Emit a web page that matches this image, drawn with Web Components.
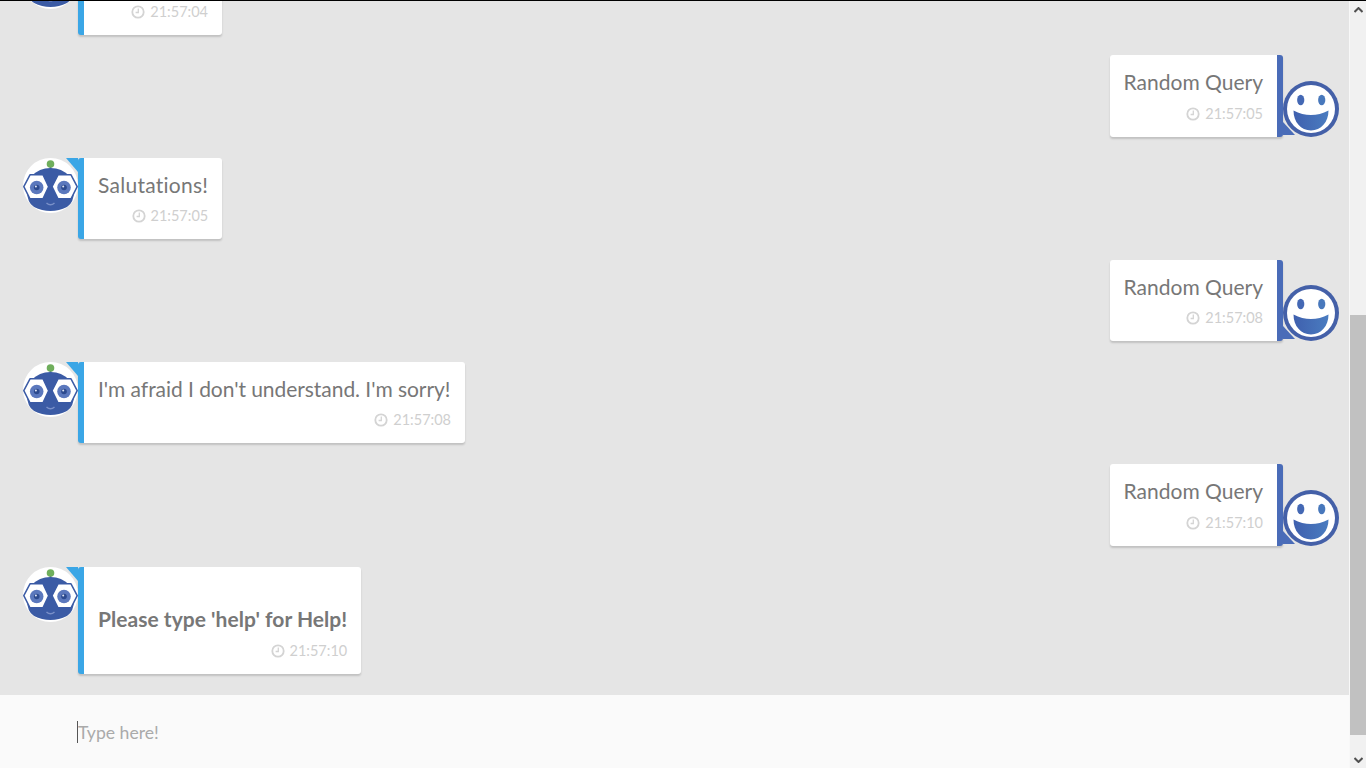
<!DOCTYPE html>
<html>
<head>
<meta charset="utf-8">
<title>Chat</title>
<style>
  html, body { margin: 0; height: 100%; overflow: hidden; background: #e5e5e5; font-family: Lato, "Liberation Sans", sans-serif; }
  body { display: flex; flex-direction: column; }
  .bar { height: 1px; background: #000; flex: none; }
  .page { flex: 1; display: flex; min-height: 0; }
  .main { flex: 1; display: flex; flex-direction: column; min-width: 0; }
  b { font-weight: 700; letter-spacing: .03px; }
</style>
</head>
<body>
<div class="bar"></div>
<div class="page">
  <div class="main">
    <chat-log>
      <chat-message from="bot" time="21:57:04" style="margin-bottom: -1px; --min-width: 144px">&nbsp;</chat-message>
      <chat-message from="user" time="21:57:05">Random Query</chat-message>
      <chat-message from="bot" time="21:57:05" style="--min-width: 144px"><span style="letter-spacing: .26px">Salutations!</span></chat-message>
      <chat-message from="user" time="21:57:08">Random Query</chat-message>
      <chat-message from="bot" time="21:57:08" style="--min-width: 387px"><span style="letter-spacing: -.05px">I'm afraid I don't understand. I'm sorry!</span></chat-message>
      <chat-message from="user" time="21:57:10">Random Query</chat-message>
      <chat-message from="bot" time="21:57:10" spaced><b>Please type 'help' for Help!</b></chat-message>
    </chat-log>
    <chat-input placeholder="Type here!"></chat-input>
  </div>
  <page-scrollbar></page-scrollbar>
</div>
<script>
class ChatLog extends HTMLElement {
    constructor() {
        super();
        this._root = this.attachShadow({ mode: "open" });
        this._root.innerHTML = `
            <style>
                :host { display: flex; flex-direction: column; justify-content: flex-end; flex: 1; min-height: 0; overflow: hidden; }
                .list { display: flex; flex-direction: column; gap: 21px; padding-bottom: 21px; flex: none; }
            </style>
            <div class="list"><slot></slot></div>
        `;
    }
}
window.customElements.define("chat-log", ChatLog);

class BotAvatar extends HTMLElement {
    constructor() {
        super();
        this._root = this.attachShadow({ mode: "open" });
        this._root.innerHTML = `
            <style>:host { display: block; width: 55px; height: 55px; } svg { display: block; }</style>
            <svg width="55" height="55" viewBox="0 0 55 55">
                <defs><clipPath id="c"><circle cx="27.5" cy="27.5" r="27.5"/></clipPath></defs>
                <circle cx="27.5" cy="27.5" r="27.5" fill="#fff"/>
                <rect x="26.6" y="6" width="1.8" height="6" fill="#3b5ba5"/>
                <circle cx="27.5" cy="6" r="3.8" fill="#6fae5c"/>
                <g clip-path="url(#c)">
                    <path d="M9 18 Q16 10 27.5 10 Q39 10 46 18 L51 32 Q51 45 44 49 Q36 53 27.5 53 Q19 53 11 49 Q4 45 4 32 Z" fill="#3b5ba5"/>
                </g>
                <path d="M7 16.8 H20 L25.6 28.7 L20 40.8 H7 L0.8 28.7 Z" fill="#fff" stroke="#3b5ba5" stroke-width="1.5" stroke-linejoin="round"/>
                <path d="M35 16.8 H48 L54.2 28.7 L48 40.8 H35 L29 28.7 Z" fill="#fff" stroke="#3b5ba5" stroke-width="1.5" stroke-linejoin="round"/>
                <circle cx="13.7" cy="29.5" r="6.8" fill="#5b78bd"/>
                <circle cx="13.7" cy="29.5" r="2.8" fill="#2c4a8e"/>
                <circle cx="12.9" cy="28.6" r="1" fill="#dfe6f5"/>
                <circle cx="41" cy="29.5" r="6.8" fill="#5b78bd"/>
                <circle cx="41" cy="29.5" r="2.8" fill="#2c4a8e"/>
                <circle cx="40.2" cy="28.6" r="1" fill="#dfe6f5"/>
                <path d="M23.5 45 Q27.5 48.5 31.5 45" fill="none" stroke="#7a90c8" stroke-width="1.5"/>
            </svg>
        `;
    }
}
window.customElements.define("bot-avatar", BotAvatar);

class UserAvatar extends HTMLElement {
    constructor() {
        super();
        this._root = this.attachShadow({ mode: "open" });
        this._root.innerHTML = `
            <style>:host { display: block; width: 56px; height: 56px; } svg { display: block; }</style>
            <svg width="56" height="56" viewBox="0 0 56 56">
                <defs>
                    <linearGradient id="g" x1="0" x2="1" y1="0" y2="0">
                        <stop offset="0" stop-color="#3f60ae"/>
                        <stop offset="1" stop-color="#4a7cc0"/>
                    </linearGradient>
                </defs>
                <circle cx="28" cy="28" r="28" fill="#4460a8"/>
                <circle cx="28" cy="28" r="24" fill="#fff"/>
                <ellipse cx="17.7" cy="19" rx="3.6" ry="5.3" fill="#4468b4"/>
                <ellipse cx="38.7" cy="19" rx="3.6" ry="5.3" fill="#4878bc"/>
                <path d="M10.5 29.5 Q28 38.5 45.5 29.5 C45.5 41 38 49.5 28 49.5 C18 49.5 10.5 41 10.5 29.5 Z" fill="url(#g)"/>
            </svg>
        `;
    }
}
window.customElements.define("user-avatar", UserAvatar);

class ChatMessage extends HTMLElement {
    constructor() {
        super();
        this._root = this.attachShadow({ mode: "open" });
    }
    connectedCallback() {
        const isUser = this.getAttribute("from") === "user";
        const time = this.getAttribute("time");
        this._root.innerHTML = `
            <style>
                :host { display: flex; height: 81px; flex: none; padding: 0 10px 0 23px; }
                :host([spaced]) { height: 107px; }
                :host([from="user"]) { height: 81.6px; justify-content: flex-end; align-items: flex-end; }
                .avatar { position: relative; z-index: 1; flex: none; }
                :host([from="user"]) .avatar { order: 2; }
                .bubble {
                    position: relative;
                    background: #fff;
                    border-radius: 3px;
                    border-left: 6px solid #3aa6e6;
                    box-shadow: 0 2px 2px rgba(0, 0, 0, .16);
                    padding: 14px 14px 0;
                    box-sizing: border-box;
                    height: 100%;
                    min-width: var(--min-width, 0);
                    color: #777;
                }
                :host([from="user"]) .bubble { border-left: 0; border-right: 6px solid #4a6cb8; }
                .bubble::before {
                    content: "";
                    position: absolute;
                    top: 0;
                    left: -18px;
                    border-top: 14px solid #3aa6e6;
                    border-left: 12px solid transparent;
                }
                :host([from="user"]) .bubble::before {
                    top: auto;
                    left: auto;
                    bottom: 2px;
                    right: -18px;
                    border-top: 0;
                    border-left: 0;
                    border-bottom: 13px solid #4a6cb8;
                    border-right: 12px solid transparent;
                }
                .text { font-size: 21px; line-height: 26px; white-space: nowrap; font-variant-ligatures: none; }
                :host([spaced]) .text { padding-top: 25px; }
                .time { display: flex; justify-content: flex-end; align-items: center; gap: 5px; margin-top: 7px; font-size: 14.5px; line-height: 22px; color: #cfcfcf; }
                :host([from="user"]) .time { margin-top: 7.3px; }
                :host([spaced]) .time { margin-top: 8px; }
                .time svg { display: block; }
            </style>
            ${isUser ? "<user-avatar class='avatar'></user-avatar>" : "<bot-avatar class='avatar'></bot-avatar>"}
            <div class="bubble">
                <div class="text"><slot></slot></div>
                <div class="time">
                    <svg width="14" height="14" viewBox="0 0 14 14" fill="none" stroke="#d4d4d4">
                        <circle cx="7" cy="7" r="5.7" stroke-width="1.8"/>
                        <path d="M7.3 3.6 V7.5 H4.6" stroke-width="1.3"/>
                    </svg>
                    <span>${time}</span>
                </div>
            </div>
        `;
    }
}
window.customElements.define("chat-message", ChatMessage);

class ChatInput extends HTMLElement {
    constructor() {
        super();
        this._root = this.attachShadow({ mode: "open" });
    }
    connectedCallback() {
        this._root.innerHTML = `
            <style>
                :host { display: flex; align-items: center; flex: none; height: 73px; background: #fafafa; padding-left: 77px; box-sizing: border-box; }
                .field { border-left: 1px solid #555; height: 22px; line-height: 24px; font-size: 17.6px; color: #aaa; }
            </style>
            <div class="field">${this.getAttribute("placeholder")}</div>
        `;
    }
}
window.customElements.define("chat-input", ChatInput);

class PageScrollbar extends HTMLElement {
    constructor() {
        super();
        this._root = this.attachShadow({ mode: "open" });
        this._root.innerHTML = `
            <style>
                :host { display: flex; flex-direction: column; flex: none; width: 17px; box-sizing: border-box; border-left: 1px solid #f8f8f8; background: #f1f1f1; }
                .btn { height: 17px; flex: none; display: flex; align-items: center; justify-content: center; }
                .space { flex: 1; }
                .thumb { height: 420px; flex: none; background: #c1c1c1; }
                .gap { height: 16px; flex: none; }
            </style>
            <div class="btn"><svg width="9" height="6" viewBox="0 0 9 6"><path d="M0.5 5 L4.5 1 L8.5 5" fill="none" stroke="#505050" stroke-width="2"/></svg></div>
            <div class="space"></div>
            <div class="thumb"></div>
            <div class="gap"></div>
            <div class="btn"><svg width="9" height="6" viewBox="0 0 9 6"><path d="M0.5 1 L4.5 5 L8.5 1" fill="none" stroke="#505050" stroke-width="2"/></svg></div>
        `;
    }
}
window.customElements.define("page-scrollbar", PageScrollbar);
</script>
</body>
</html>
